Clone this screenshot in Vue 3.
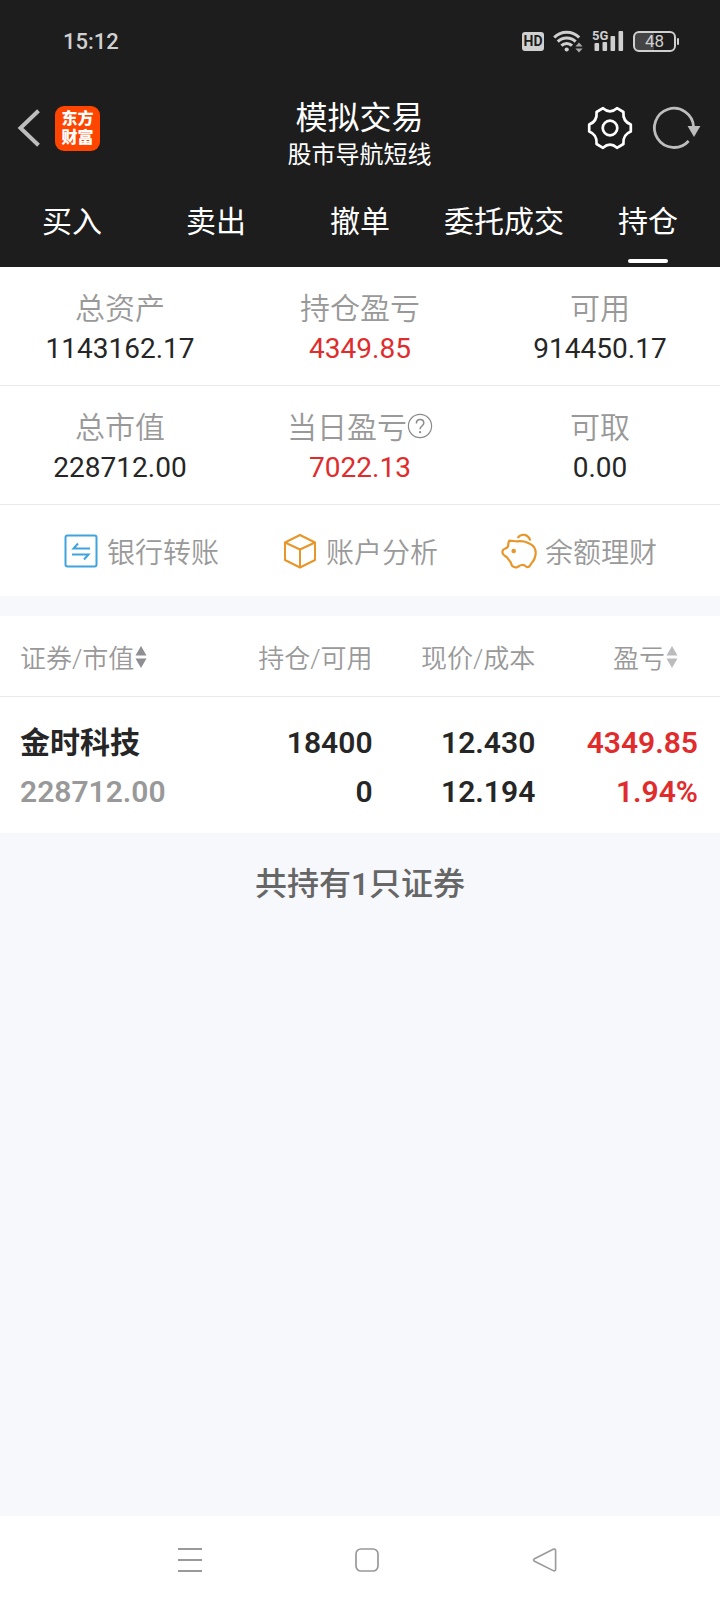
<template>
  <div class="trade-page">
    <header class="top">
      <div class="status-bar">
        <time class="clock">15:12</time>
        <div class="status-icons">
          <span class="hd">HD</span>
          <svg class="wifi" viewBox="0 0 30 24" fill="none" stroke="#d0d0d0" stroke-width="3">
            <path d="M1.2 8.5a17.5 17.5 0 0 1 25 0" />
            <path d="M4.8 12.6a12.5 12.5 0 0 1 17.8 0" />
            <path d="M8.4 16.6a7.5 7.5 0 0 1 10.6 0" />
            <circle cx="13.7" cy="20.5" r="2.1" fill="#d0d0d0" stroke="none" />
            <path d="M22.4 17.6l3.6-4 3.6 4zM22.4 19.4l3.6 4 3.6-4z" fill="#a8a8a8" stroke="none" />
          </svg>
          <svg class="signal" viewBox="0 0 32 24" fill="#d0d0d0">
            <text x="0" y="11">5G</text>
            <rect x="2.5" y="14" width="4.6" height="8" rx="1" />
            <rect x="10.5" y="13" width="4.6" height="9" rx="1" />
            <rect x="18.5" y="7" width="4.6" height="15" rx="1" />
            <rect x="26.5" y="2" width="4.6" height="20" rx="1" />
          </svg>
          <span class="battery">48</span>
        </div>
      </div>

      <div class="title-bar">
        <div class="side">
          <button class="icon-btn" aria-label="返回">
            <svg class="back" viewBox="0 0 24 40" fill="none" stroke="#bdbdbd" stroke-width="4">
              <path d="M21.5 2.8L3.5 20l18 17.2" />
            </svg>
          </button>
          <a class="logo" href="#"><span>东方</span><span>财富</span></a>
        </div>
        <div class="heading">
          <h1>模拟交易</h1>
          <p>股市导航短线</p>
        </div>
        <div class="side side-right">
          <button class="icon-btn" aria-label="设置">
            <svg class="gear" viewBox="0 0 48 48" fill="none" stroke="#fff" stroke-width="2.7" stroke-linejoin="round">
              <path d="M17 4.2Q24 10.4 31 4.2L37.4 8Q36.6 17.4 44.8 20.5V27.5Q36.6 30.6 37.4 40L31 43.8Q24 37.6 17 43.8L10.6 40Q11.4 30.6 3.2 27.5V20.5Q11.4 17.4 10.6 8Z" />
              <circle cx="24" cy="24" r="7.3" />
            </svg>
          </button>
          <button class="icon-btn" aria-label="刷新">
            <svg class="refresh" viewBox="0 0 52 48" fill="none" stroke="#bdbdbd" stroke-width="2.8">
              <path d="M38.6 37A19.6 19.6 0 1 1 43.6 23" />
              <path d="M37.6 22h12.8L44 33z" fill="#bdbdbd" stroke="none" />
            </svg>
          </button>
        </div>
      </div>

      <nav class="tabs">
        <button
          v-for="tab in tabs"
          :key="tab"
          :class="{ active: tab === activeTab }"
          @click="activeTab = tab"
        >{{ tab }}</button>
      </nav>
    </header>

    <section class="summary">
      <div v-for="item in summary" :key="item.label" class="cell">
        <div class="label">
          {{ item.label }}
          <button v-if="item.help" class="icon-btn" aria-label="说明">
            <svg class="help" viewBox="0 0 26 30" fill="none" stroke="#8a8a8a" stroke-width="1.2">
              <circle cx="13" cy="13" r="11.6" />
              <path d="M9.4 10.4c0-2.4 1.6-3.9 3.7-3.9s3.7 1.4 3.7 3.5c0 2.9-3.7 3.2-3.7 6.2" stroke-width="1.5" />
              <circle cx="13.1" cy="19.2" r="1.1" fill="#8a8a8a" stroke="none" />
            </svg>
          </button>
        </div>
        <div class="value" :class="{ up: item.up }">{{ item.value }}</div>
      </div>
    </section>

    <section class="actions">
      <a href="#">
        <svg viewBox="0 0 36 36" fill="none" stroke="#3fa4dc" stroke-width="2">
          <rect x="2.5" y="2.5" width="31" height="31" rx="2" />
          <path d="M27 15.5H10.500L15 10.5M9 21.5h16.5L21 26.5" />
        </svg>
        银行转账
      </a>
      <a href="#">
        <svg viewBox="0 0 36 36" fill="none" stroke="#e8962a" stroke-width="2" stroke-linejoin="round">
          <path d="M18 2l15 7.5v17.5L18 34.5 3 27V9.5zM3 9.5l15 7 15-7M18 16.5v18" />
        </svg>
        账户分析
      </a>
      <a href="#">
        <svg viewBox="0 0 36 36" fill="none" stroke="#e8962a" stroke-width="2.2" stroke-linejoin="round">
          <path d="M8.3 7.7C11 7.6 13.8 8.5 16.7 8.3C20.5 8 24 8.5 26.7 9.7C30 11 32.2 12.5 33.3 14.5C34.8 17 34.9 19.5 34.5 22C34 25 33.3 27 31.7 28.7C29.8 30.5 29.6 32.3 28.3 33.4C27.4 34.2 25.9 34.2 25 33.5C23.7 32.2 22.2 31.8 20.7 32C19 32.2 18 33.2 16.7 33.9C15 34.6 12.8 34.3 11.5 33.2C10.2 31.9 10.4 30.1 9.3 28.7C8 27.2 7.2 26.4 6 24.3C4.5 23.2 2.8 22.4 2 21C1.2 19.6 1.3 18.2 2 17C3.2 15.5 5.5 15.5 6.7 14C7.8 12.3 6.6 9.7 8.3 7.7Z" />
          <path d="M16.7 5C19.5.5 27 .2 29.3 7.5" />
          <circle cx="12.7" cy="18" r="2.3" fill="#e8962a" stroke="none" />
        </svg>
        余额理财
      </a>
    </section>

    <section class="holdings">
      <table>
        <thead>
          <tr>
            <th class="name">
              <button class="sort">
                证券/市值
                <svg viewBox="0 0 12 24" fill="#8e8e93"><path d="M.5 10.5L6 1l5.5 9.5zM.5 13.5L6 23l5.5-9.5z" /></svg>
              </button>
            </th>
            <th>持仓/可用</th>
            <th>现价/成本</th>
            <th class="profit">
              <button class="sort">
                盈亏
                <svg viewBox="0 0 12 24" fill="#bcbcbe"><path d="M.5 10.5L6 1l5.5 9.5zM.5 13.5L6 23l5.5-9.5z" /></svg>
              </button>
            </th>
          </tr>
        </thead>
        <tbody>
          <tr v-for="row in holdings" :key="row.name">
            <td class="name">{{ row.name }}<span class="muted">{{ row.marketValue }}</span></td>
            <td>{{ row.amount }}<span>{{ row.available }}</span></td>
            <td>{{ row.price }}<span>{{ row.cost }}</span></td>
            <td class="up">{{ row.profit }}<span>{{ row.rate }}</span></td>
          </tr>
        </tbody>
      </table>
    </section>

    <p class="total">共持有{{ holdings.length }}只证券</p>

    <footer class="system-nav">
      <button class="icon-btn" aria-label="最近任务">
        <svg viewBox="0 0 28 28" fill="none" stroke="#999" stroke-width="1.8"><path d="M2 3h24M2 14h24M2 25h24" /></svg>
      </button>
      <button class="icon-btn" aria-label="主页">
        <svg viewBox="0 0 28 28" fill="none" stroke="#999" stroke-width="1.7"><rect x="3" y="3" width="22" height="22" rx="5" /></svg>
      </button>
      <button class="icon-btn" aria-label="返回上一页">
        <svg viewBox="0 0 28 28" fill="none" stroke="#999" stroke-width="1.6">
          <path d="M3.5 12.7L22.2 3.2Q24.6 2.4 24.6 5V23Q24.6 25.6 22.2 24.6L3.5 15.3Q1.5 14 3.5 12.7z" />
        </svg>
      </button>
    </footer>
  </div>
</template>

<script setup>
import { ref } from 'vue';

const tabs = ['买入', '卖出', '撤单', '委托成交', '持仓'];
const activeTab = ref('持仓');

const summary = [
  { label: '总资产', value: '1143162.17' },
  { label: '持仓盈亏', value: '4349.85', up: true },
  { label: '可用', value: '914450.17' },
  { label: '总市值', value: '228712.00' },
  { label: '当日盈亏', value: '7022.13', up: true, help: true },
  { label: '可取', value: '0.00' },
];

const holdings = ref([
  {
    name: '金时科技',
    marketValue: '228712.00',
    amount: '18400',
    available: '0',
    price: '12.430',
    cost: '12.194',
    profit: '4349.85',
    rate: '1.94%',
  },
]);
</script>

<style>
body {
  background: #f6f8fb;
}
</style>

<style scoped>
.trade-page {
  min-height: 100vh;
  display: flex;
  flex-direction: column;
  background: #f6f8fb;
  color: #262626;
  font-family: Roboto, 'Noto Sans CJK SC', sans-serif;
}
button {
  margin: 0;
  padding: 0;
  border: 0;
  background: none;
  color: inherit;
  font: inherit;
  cursor: pointer;
}
a {
  color: inherit;
  text-decoration: none;
}
svg {
  display: block;
  flex: none;
}
.icon-btn {
  display: block;
}

/* dark header */
.top {
  background: #1d1d1d;
  color: #fff;
}
.status-bar {
  height: 82px;
  padding: 0 41px 0 63px;
  display: flex;
  align-items: center;
  justify-content: space-between;
  color: #d0d0d0;
}
.clock {
  font-size: 22px;
  font-weight: 500;
}
.status-icons {
  display: flex;
  align-items: center;
  gap: 9px;
}
.hd {
  width: 22px;
  border-radius: 3px;
  background: #d0d0d0;
  color: #1d1d1d;
  font-size: 14px;
  line-height: 19px;
  font-weight: 700;
  text-align: center;
}
.wifi {
  width: 30px;
  height: 24px;
}
.signal {
  width: 32px;
  height: 24px;
}
.signal text {
  font-size: 13px;
  font-weight: 700;
}
.battery {
  position: relative;
  box-sizing: border-box;
  width: 43px;
  margin-right: 3px;
  border: 2px solid #d0d0d0;
  border-radius: 6px;
  background: linear-gradient(90deg, #444 48%, transparent 48%);
  font-size: 17px;
  line-height: 17px;
  text-align: center;
}
.battery::after {
  content: '';
  position: absolute;
  top: 5px;
  right: -5px;
  width: 2px;
  height: 7px;
  border-radius: 1px;
  background: #d0d0d0;
}
.title-bar {
  height: 92px;
  padding: 0 18px 0 17px;
  display: grid;
  grid-template-columns: 1fr auto 1fr;
  align-items: center;
}
.side {
  display: flex;
  align-items: center;
  gap: 14px;
}
.side-right {
  justify-content: flex-end;
  gap: 16px;
}
.back {
  width: 24px;
  height: 40px;
}
.gear {
  width: 48px;
  height: 48px;
}
.refresh {
  width: 52px;
  height: 48px;
}
.logo {
  width: 45px;
  height: 45px;
  border-radius: 9px;
  background: #ff4500;
  display: flex;
  flex-direction: column;
  align-items: center;
  justify-content: center;
  font-size: 16px;
  line-height: 19px;
  font-weight: 900;
}
.heading {
  padding-top: 14px;
  text-align: center;
}
.heading h1 {
  margin: 0;
  font-size: 32px;
  line-height: 40px;
  font-weight: 400;
}
.heading p {
  margin: 0;
  font-size: 24px;
  line-height: 34px;
}
.tabs {
  display: grid;
  grid-template-columns: repeat(5, 1fr);
}
.tabs button {
  padding: 26px 0 4px;
  font-size: 30px;
  line-height: 44px;
  white-space: nowrap;
}
.tabs button::after {
  content: '';
  display: block;
  width: 40px;
  height: 4px;
  margin: 15px auto 0;
  border-radius: 2px;
}
.tabs .active::after {
  background: #fff;
}

/* account figures */
.summary {
  display: grid;
  grid-template-columns: repeat(3, 1fr);
  background: #fff;
}
.cell {
  padding: 22px 0 17px;
  border-bottom: 1px solid #e9e9e9;
  text-align: center;
}
.label {
  display: flex;
  align-items: center;
  justify-content: center;
  color: #999;
  font-size: 30px;
  font-weight: 350;
  line-height: 40px;
}
.help {
  width: 26px;
  height: 30px;
}
.value {
  font-size: 28px;
  line-height: 39px;
}
.up,
.holdings .up {
  color: #e02c2c;
}
.actions {
  display: flex;
  justify-content: space-evenly;
  padding: 28px 0 21px;
  margin-bottom: 20px;
  background: #fff;
}
.actions a {
  display: flex;
  align-items: flex-start;
  gap: 8px;
  color: #999;
  font-size: 28px;
  font-weight: 350;
  line-height: 42px;
}
.actions svg {
  width: 36px;
  height: 36px;
}

/* positions */
.holdings {
  padding: 0 22px 0 20px;
  background: linear-gradient(#e9e9e9, #e9e9e9) 0 80px / 100% 1px no-repeat #fff;
}
table {
  width: 100%;
  table-layout: fixed;
  border-collapse: collapse;
}
th,
td {
  width: 24%;
  padding: 0;
  text-align: right;
}
th {
  height: 81px;
  color: #999;
  font-size: 26px;
  font-weight: 350;
  white-space: nowrap;
}
.name {
  width: 28%;
  text-align: left;
}
.profit {
  padding-right: 20px;
  box-sizing: border-box;
}
.sort {
  display: inline-flex;
  align-items: center;
  gap: 1px;
}
.sort svg {
  width: 12px;
  height: 24px;
}
td {
  padding: 21px 0 17px;
  font-size: 30px;
  line-height: 49px;
  font-weight: 600;
}
td span {
  display: block;
}
.muted {
  color: #999;
}
.total {
  margin: 27px 0;
  color: #666;
  font-size: 32px;
  line-height: 48px;
  font-weight: 500;
  text-align: center;
}

.system-nav {
  margin-top: auto;
  height: 88px;
  padding: 0 86px 0 101px;
  display: flex;
  align-items: center;
  justify-content: space-around;
  background: #fff;
}
.system-nav svg {
  width: 28px;
  height: 28px;
}
</style>
